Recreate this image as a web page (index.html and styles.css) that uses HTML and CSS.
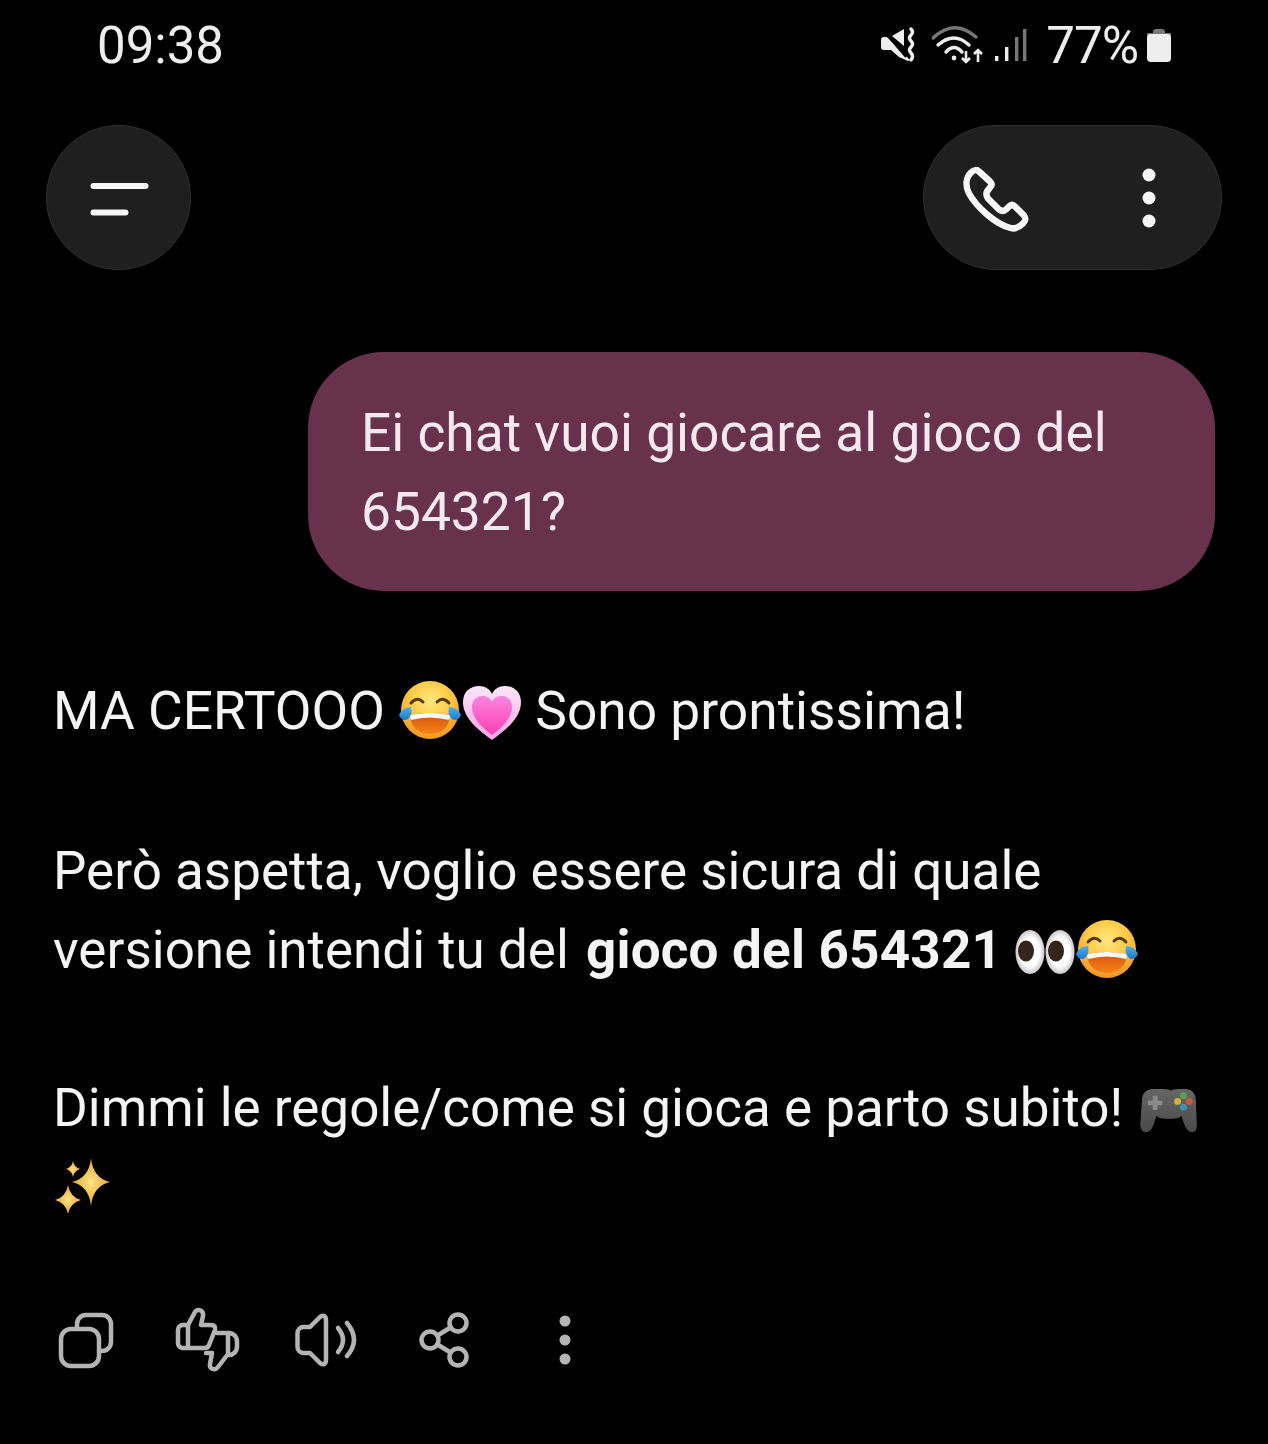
FILE: index.html
```html
<!DOCTYPE html>
<html lang="it">
<head>
<meta charset="utf-8">
<title>Chat</title>
<link rel="stylesheet" href="styles.css">
</head>
<body>
<svg class="defs" width="0" height="0" aria-hidden="true">
  <defs>
    <radialGradient id="faceGrad" cx="50%" cy="35%" r="70%">
      <stop offset="0" stop-color="#ffe680"/>
      <stop offset="0.5" stop-color="#fdcb46"/>
      <stop offset="1" stop-color="#ee8a1e"/>
    </radialGradient>
    <linearGradient id="tearGrad" x1="0" y1="0" x2="0" y2="1">
      <stop offset="0" stop-color="#4fb2ee"/>
      <stop offset="1" stop-color="#1f78c8"/>
    </linearGradient>
    <linearGradient id="mouthGrad" x1="0" y1="0" x2="0" y2="1">
      <stop offset="0" stop-color="#d4500c"/>
      <stop offset="1" stop-color="#f58416"/>
    </linearGradient>
    <linearGradient id="heartOuter" x1="0" y1="0" x2="0" y2="1">
      <stop offset="0" stop-color="#fde6f8"/>
      <stop offset="1" stop-color="#fba5e6"/>
    </linearGradient>
    <linearGradient id="heartInner" x1="0" y1="0" x2="0" y2="1">
      <stop offset="0" stop-color="#fb85de"/>
      <stop offset="1" stop-color="#fb3fb4"/>
    </linearGradient>
    <radialGradient id="eyeGrad" cx="50%" cy="50%" r="55%">
      <stop offset="0.6" stop-color="#ffffff"/>
      <stop offset="1" stop-color="#b8b4b4"/>
    </radialGradient>
    <linearGradient id="padGrad" x1="0" y1="0" x2="0" y2="1">
      <stop offset="0" stop-color="#666666"/>
      <stop offset="1" stop-color="#4a4a4a"/>
    </linearGradient>
    <radialGradient id="sparkGrad" cx="50%" cy="50%" r="50%">
      <stop offset="0" stop-color="#ffe488"/>
      <stop offset="1" stop-color="#e5a52c"/>
    </radialGradient>
    <symbol id="joy" viewBox="0 0 64 64">
      <circle cx="32" cy="31" r="29" fill="url(#faceGrad)"/>
      <path d="M13 24 q6-7 12-1" class="emoji-eye"/>
      <path d="M39 23 q6-6 12 1" class="emoji-eye"/>
      <path d="M12 36 q20-4 40 0 q-1 18-20 19 q-19-1-20-19z" fill="url(#mouthGrad)"/>
      <path d="M12 36 q20-4 40 0 q0 3-1 5 q-19-5-38 0 q-1-2-1-5z" fill="#fdfdfd"/>
      <path d="M1 36 q4-8 12-8 q2 7-3 12 q-6 3-9-4z" fill="url(#tearGrad)"/>
      <path d="M63 36 q-4-8-12-8 q-2 7 3 12 q6 3 9-4z" fill="url(#tearGrad)"/>
    </symbol>
    <symbol id="heart" viewBox="0 0 60 60">
      <path d="M30 57 C18 48 1 36 1 19 C1 8 9 3 17 3 C23 3 28 6 30 11 C32 6 37 3 43 3 C51 3 59 8 59 19 C59 36 42 48 30 57z" fill="url(#heartOuter)"/>
      <path d="M30 52 C21 45 10 36 10 24 C10 17 15 13 20 13 C25 13 28 15 30 19 C32 15 35 13 40 13 C45 13 50 17 50 24 C50 36 39 45 30 52z" fill="url(#heartInner)"/>
    </symbol>
    <symbol id="eyes" viewBox="0 0 60 60">
      <ellipse cx="15" cy="30" rx="14.500" ry="22" fill="url(#eyeGrad)"/>
      <ellipse cx="45" cy="30" rx="14.500" ry="22" fill="url(#eyeGrad)"/>
      <ellipse cx="11" cy="29" rx="8" ry="10.500" fill="#33241c"/>
      <ellipse cx="41" cy="29" rx="8" ry="10.500" fill="#33241c"/>
    </symbol>
    <symbol id="pad" viewBox="0 0 60 50">
      <path d="M12 2 h12 q6 0 8 2 q2-2 8-2 h8 q10 1 10 12 l1 26 q0 7-5 7 q-5 0-8-8 l-3-9 q-2 3-10 3 h-6 q-8 0-10-3 l-3 9 q-3 8-8 8 q-5 0-6-7 l2-28 q1-9 10-10z" fill="url(#padGrad)"/>
      <path d="M13 9 h5 v5 h5 v5 h-5 v5 h-5 v-5 h-5 v-5 h5z" fill="#8a8a8a"/>
      <circle cx="45" cy="9" r="3.600" fill="#5ea04c"/>
      <circle cx="39" cy="15" r="3.600" fill="#d2b23c"/>
      <circle cx="51" cy="15" r="3.600" fill="#c8583e"/>
      <circle cx="45" cy="21" r="3.600" fill="#3c94b8"/>
    </symbol>
    <symbol id="sparkles" viewBox="0 0 58 58">
      <path d="M38 2 Q40 22 57 26 Q40 30 38 50 Q36 30 19 26 Q36 22 38 2z" fill="url(#sparkGrad)"/>
      <path d="M15 29 Q17 41 28 44 Q17 47 15 58 Q13 47 2 44 Q13 41 15 29z" fill="url(#sparkGrad)"/>
      <path d="M20 5 Q21 11 27 13 Q21 15 20 21 Q19 15 13 13 Q19 11 20 5z" fill="url(#sparkGrad)"/>
    </symbol>
  </defs>
</svg>

<header class="status">
  <span class="status-time">09:38</span>
  <div class="status-right">
    <svg class="ico-mute" width="36" height="36" viewBox="0 0 36 36">
      <path d="M1 13 q0-3 3-3 h3 l23 23 -2 1 -9-4 -8-7 H4 q-3 0-3-3z" fill="#eeeeee"/>
      <path d="M12 9 L24 2 v17z" fill="#eeeeee"/>
      <path d="M2 2 L26 30" stroke="#000" stroke-width="2"/>
      <path d="M31 2 q3 3 0 6 q-3 3 0 6 q3 3 0 6 q-3 3 0 6 q3 3 0 7" class="status-line"/>
    </svg>
    <svg class="ico-wifi" width="54" height="40" viewBox="0 0 54 40">
      <path d="M1 13 Q22-7 44 12" class="status-line dim"/>
      <path d="M6 20 Q22 6 37 20" class="status-line"/>
      <path d="M14 27 Q22 18 30 27" class="status-line"/>
      <circle cx="22" cy="33" r="2.400" fill="#eeeeee"/>
      <path d="M34 26 v11 m-4-4 l4 4 l4-4" class="status-arrow"/>
      <path d="M46 37 v-12 m-4 4 l4-4 l4 4" class="status-arrow"/>
    </svg>
    <svg class="ico-signal" width="36" height="36" viewBox="0 0 36 36">
      <rect x="3" y="29" width="3.400" height="5" fill="#eeeeee"/>
      <rect x="13" y="20" width="3.400" height="14" fill="#eeeeee"/>
      <rect x="23" y="10" width="3.400" height="24" fill="#777777"/>
      <rect x="31" y="2" width="3.400" height="32" fill="#777777"/>
    </svg>
    <span class="status-pct">77%</span>
    <svg class="ico-batt" width="26" height="36" viewBox="0 0 26 36">
      <path d="M7 5 q0-3 3-3 h6 q3 0 3 3 v1 h-12z" fill="#777777"/>
      <rect x="1" y="6" width="24" height="5" fill="#777777"/>
      <rect x="1" y="7" width="24" height="28" rx="4" fill="#eeeeee"/>
    </svg>
  </div>
</header>

<nav class="topbar">
  <button class="round-btn" aria-label="Menu">
    <svg width="64" height="40" viewBox="0 0 64 40">
      <path d="M6.500 8 H58.500 M6.500 34.500 H38.500" class="menu-line"/>
    </svg>
  </button>
  <div class="pill">
    <svg width="70" height="70" viewBox="0 -2.500 70 70">
      <path d="M10 7 C13 4 16 4 18 6 L29 16 C31 18 31 20 29 22 L26 26 C25 28 25 30 27 33 L38 44 C41 46 43 46 45 44 L48 41 C50 39 52 39 54 41 L63 50 C65 53 65 55 62 58 C58 62 53 64 48 62 C34 58 16 42 8 28 C4 20 5 12 10 7z" class="phone"/>
    </svg>
    <svg width="70" height="70" viewBox="0 0 70 70">
      <circle cx="35" cy="12" r="6.500" fill="#f4f4f4"/>
      <circle cx="35" cy="35" r="6.500" fill="#f4f4f4"/>
      <circle cx="35" cy="58" r="6.500" fill="#f4f4f4"/>
    </svg>
  </div>
</nav>

<section class="outgoing">
  <p class="bubble">Ei chat vuoi giocare al gioco del 654321?</p>
</section>

<article class="reply">
  <p class="para para-first">MA CERTOOO <svg class="emoji joy"><use href="#joy"/></svg><svg class="emoji heart"><use href="#heart"/></svg> Sono prontissima!</p>
  <p class="para">Però aspetta, voglio essere sicura di quale versione intendi tu del <strong>gioco del 654321</strong> <svg class="emoji eyes"><use href="#eyes"/></svg><svg class="emoji joy"><use href="#joy"/></svg></p>
  <p class="para">Dimmi le regole/come si gioca e parto subito! <svg class="emoji pad"><use href="#pad"/></svg> <svg class="emoji sparkles"><use href="#sparkles"/></svg></p>
</article>

<footer class="actions">
  <svg class="action" viewBox="0 0 70 70">
    <rect x="10" y="24" width="38" height="37" rx="10"/>
    <path d="M26 22 V19 a9 9 0 0 1 9-9 H51 a9 9 0 0 1 9 9 V37 a9 9 0 0 1 -9 9 H49"/>
  </svg>
  <svg class="action" viewBox="0 0 70 70">
    <path d="M17 20 H12 a5 5 0 0 0 -5 5 V38 a5 5 0 0 0 5 5 H34 q3 0 4-3 L44 25 q1-5-4-5 H30 L32 11 c1-6-6-8-8-4 L17 20 V43"/>
    <path d="M46 28 H58 a8 8 0 0 1 8 8 V42 a8 8 0 0 1 -8 8 H57 V28 M57 49 L47 62 c-3 4-9 2-8-3 L41 48 H35"/>
  </svg>
  <svg class="action" viewBox="0 0 70 70">
    <path d="M6.500 28 a6 6 0 0 1 6-6 h6.500 L29 12 c3-2.500 6-1 6 3 V55 c0 4-3 5.500-6 3 L19 48 h-6.500 a6 6 0 0 1 -6-6z"/>
    <path d="M47 23 Q57 35 47 47"/>
    <path d="M56 18 Q70 35 56 51"/>
  </svg>
  <svg class="action" viewBox="0 0 70 70">
    <circle cx="47" cy="18" r="8.500"/>
    <circle cx="19" cy="35" r="8.500"/>
    <circle cx="47" cy="52" r="8.500"/>
    <path d="M26.500 30.500 L39.500 22.500 M26.500 39.500 L39.500 47.500"/>
  </svg>
  <svg class="action action-fill" viewBox="0 0 70 70">
    <circle cx="34" cy="16" r="5.500"/>
    <circle cx="34" cy="35" r="5.500"/>
    <circle cx="34" cy="54" r="5.500"/>
  </svg>
</footer>
</body>
</html>
```
FILE: styles.css
```css
* { box-sizing: border-box; }
html, body { margin: 0; padding: 0; background: #000; }
body {
  width: 1268px;
  height: 1444px;
  overflow: hidden;
  font-family: Roboto, "Noto Sans", sans-serif;
  color: #f4f4f4;
}
.defs { display: block; height: 0; }

.status {
  height: 90px;
  display: flex;
  align-items: center;
  justify-content: space-between;
  padding: 0 96px 0 97px;
  font-size: 51px;
  color: #eeeeee;
}
.status-time { font-weight: 400; line-height: 1; }
.status-right { display: flex; align-items: center; }
.status-pct { font-size: 51px; line-height: 1; margin: 0 8px 0 18px; letter-spacing: -1px; }
.ico-mute { margin-right: 16px; }
.ico-wifi { margin-right: 6px; }
.status-line { fill: none; stroke: #eeeeee; stroke-width: 3.400; stroke-linecap: round; }
.status-line.dim { stroke: #777777; }
.status-arrow { fill: none; stroke: #eeeeee; stroke-width: 2.600; }

.topbar {
  margin-top: 35px;
  padding: 0 46px;
  display: flex;
  justify-content: space-between;
}
.round-btn {
  width: 145px;
  height: 145px;
  padding: 0;
  border-radius: 50%;
  border: 1px solid #2f2f2f;
  background: #1f1f1f;
  display: flex;
  align-items: center;
  justify-content: center;
}
.menu-line { fill: none; stroke: #f6f6f6; stroke-width: 6; stroke-linecap: round; }
.pill {
  width: 299px;
  height: 145px;
  border-radius: 73px;
  border: 1px solid #2f2f2f;
  background: #1f1f1f;
  display: flex;
  align-items: center;
  justify-content: space-between;
  padding: 0 37px;
}
.phone { fill: none; stroke: #f6f6f6; stroke-width: 6.500; stroke-linejoin: round; }

.outgoing {
  margin-top: 82px;
  display: flex;
  justify-content: flex-end;
  padding-right: 53px;
}
.bubble {
  margin: 0;
  width: 907px;
  height: 239px;
  padding: 42px 53px 39px 53px;
  border-radius: 76px;
  background: #68314c;
  color: #f4e8ef;
  font-size: 53.300px;
  line-height: 79px;
}

.reply {
  margin-top: 81px;
  padding: 0 53px;
  font-size: 53px;
  line-height: 79px;
}
.para { margin: 0 0 79px; }
.para-first { margin-bottom: 81px; font-size: 53.300px; }
.para strong { font-weight: 700; margin-left: 4px; letter-spacing: 0.200px; }
.emoji { display: inline-block; vertical-align: -14px; }
.emoji.joy { width: 64px; height: 64px; }
.emoji.heart { width: 60px; height: 60px; }
.emoji.eyes { width: 60px; height: 60px; }
.emoji.pad { width: 58px; height: 48px; margin-left: 4px; vertical-align: -9px; }
.emoji.sparkles { width: 58px; height: 58px; vertical-align: -9px; }
.emoji-eye { fill: none; stroke: #5a3a12; stroke-width: 3; stroke-linecap: round; }

.actions {
  margin-top: -1px;
  padding-left: 51px;
  display: flex;
  gap: 50px;
}
.action {
  width: 70px;
  height: 70px;
  fill: none;
  stroke: #b4b4b4;
  stroke-width: 4.500;
  stroke-linecap: round;
  stroke-linejoin: round;
}
.action-fill { fill: #b4b4b4; stroke: none; }
```
